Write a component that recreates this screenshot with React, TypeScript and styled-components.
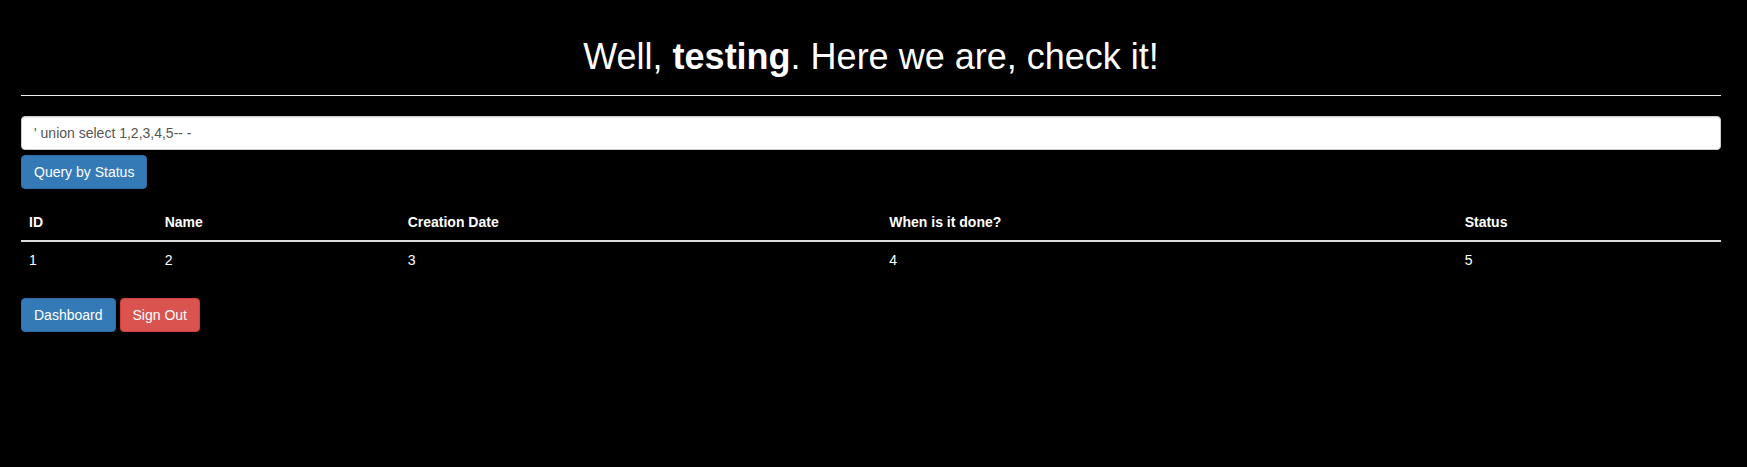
import React from 'react';
import styled, { createGlobalStyle } from 'styled-components';

const GlobalStyle = createGlobalStyle`
  html, body {
    margin: 0;
    padding: 0;
    background: #000;
  }
  body {
    font-family: "Liberation Sans", Arial, sans-serif;
    font-size: 14px;
    line-height: 1.42857;
    color: #fff;
  }
  * {
    box-sizing: border-box;
  }
`;

const Page = styled.div`
  padding: 16px 26px 0 21px;
`;

const Heading = styled.h1`
  margin: 22px 0 0;
  font-size: 36px;
  font-weight: 400;
  line-height: 37px;
  text-align: center;
  color: #fff;
`;

const Rule = styled.hr`
  margin: 20px 0;
  border: 0;
  border-top: 1px solid #eee;
`;

const QueryForm = styled.form`
  display: flex;
  flex-direction: column;
  align-items: flex-start;
  gap: 5px;
`;

const Input = styled.input`
  display: block;
  width: 100%;
  height: 34px;
  padding: 6px 12px;
  font-family: inherit;
  font-size: 14px;
  color: #555;
  background: #fff;
  border: 1px solid #ccc;
  border-radius: 4px;
  box-shadow: inset 0 1px 1px rgba(0, 0, 0, 0.075);
  outline: none;
`;

const Button = styled.button<{ $variant: 'primary' | 'danger' }>`
  display: inline-block;
  height: 34px;
  padding: 6px 12px;
  font-family: inherit;
  font-size: 14px;
  line-height: 20px;
  color: #fff;
  border-radius: 4px;
  cursor: pointer;
  background: ${({ $variant }) => ($variant === 'danger' ? '#d9534f' : '#337ab7')};
  border: 1px solid ${({ $variant }) => ($variant === 'danger' ? '#d43f3a' : '#2e6da4')};
`;

const Table = styled.table`
  width: 100%;
  margin: 15px 0 20px;
  border-collapse: collapse;
  border-spacing: 0;
  table-layout: fixed;
`;

const HeadCell = styled.th`
  padding: 8px;
  text-align: left;
  font-weight: 700;
  line-height: 20px;
  border-bottom: 2px solid #ddd;
`;

const Cell = styled.td`
  padding: 8px;
  line-height: 20px;
  border-top: 1px solid transparent;
`;

const Actions = styled.div`
  display: flex;
  gap: 4px;
`;

const columns = [
  { label: 'ID', width: 135.7 },
  { label: 'Name', width: 243 },
  { label: 'Creation Date', width: 481.6 },
  { label: 'When is it done?', width: 575.4 },
  { label: 'Status', width: 264.3 },
];

const rows = [['1', '2', '3', '4', '5']];

export default function App() {
  return (
    <>
      <GlobalStyle />
      <Page>
        <Heading>
          Well, <b>testing</b>. Here we are, check it!
        </Heading>
        <Rule />
        <QueryForm onSubmit={(e) => e.preventDefault()}>
          <Input type="text" defaultValue="' union select 1,2,3,4,5-- -" />
          <Button $variant="primary" type="submit">
            Query by Status
          </Button>
        </QueryForm>
        <Table>
          <colgroup>
            {columns.map((c) => (
              <col key={c.label} style={{ width: c.width }} />
            ))}
          </colgroup>
          <thead>
            <tr>
              {columns.map((c) => (
                <HeadCell key={c.label}>{c.label}</HeadCell>
              ))}
            </tr>
          </thead>
          <tbody>
            {rows.map((r, i) => (
              <tr key={i}>
                {r.map((v, j) => (
                  <Cell key={j}>{v}</Cell>
                ))}
              </tr>
            ))}
          </tbody>
        </Table>
        <Actions>
          <Button $variant="primary">Dashboard</Button>
          <Button $variant="danger">Sign Out</Button>
        </Actions>
      </Page>
    </>
  );
}
